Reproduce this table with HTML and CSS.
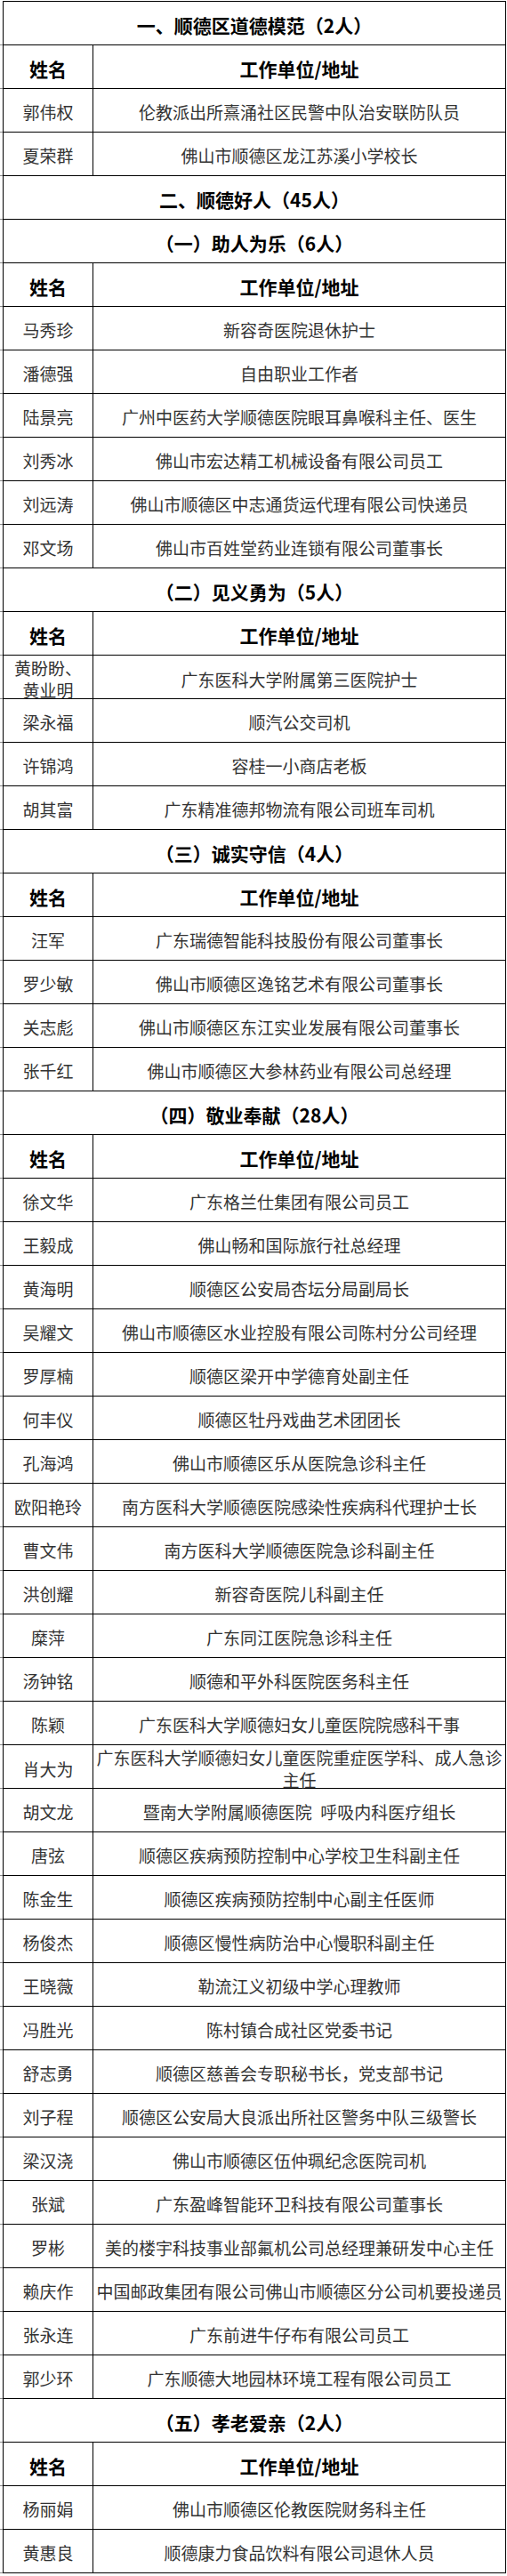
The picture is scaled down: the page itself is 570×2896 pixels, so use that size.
FILE: index.html
```html
<!DOCTYPE html>
<html lang="zh-CN">
<head>
<meta charset="utf-8">
<title>顺德区道德模范、顺德好人名单</title>
<link rel="stylesheet" href="styles.css">
</head>
<body>
<div class="sheet">
  <div class="row title">一、顺德区道德模范（2人）</div>
  <div class="row head"><div class="name">姓名</div><div class="work">工作单位/地址</div></div>
  <div class="row"><div class="name">郭伟权</div><div class="work">伦教派出所熹涌社区民警中队治安联防队员</div></div>
  <div class="row"><div class="name">夏荣群</div><div class="work">佛山市顺德区龙江苏溪小学校长</div></div>

  <div class="row title">二、顺德好人（45人）</div>

  <div class="row title">（一）助人为乐（6人）</div>
  <div class="row head"><div class="name">姓名</div><div class="work">工作单位/地址</div></div>
  <div class="row"><div class="name">马秀珍</div><div class="work">新容奇医院退休护士</div></div>
  <div class="row"><div class="name">潘德强</div><div class="work">自由职业工作者</div></div>
  <div class="row"><div class="name">陆景亮</div><div class="work">广州中医药大学顺德医院眼耳鼻喉科主任、医生</div></div>
  <div class="row"><div class="name">刘秀冰</div><div class="work">佛山市宏达精工机械设备有限公司员工</div></div>
  <div class="row"><div class="name">刘远涛</div><div class="work">佛山市顺德区中志通货运代理有限公司快递员</div></div>
  <div class="row"><div class="name">邓文场</div><div class="work">佛山市百姓堂药业连锁有限公司董事长</div></div>

  <div class="row title">（二）见义勇为（5人）</div>
  <div class="row head"><div class="name">姓名</div><div class="work">工作单位/地址</div></div>
  <div class="row"><div class="name two">黄盼盼、<br>黄业明</div><div class="work">广东医科大学附属第三医院护士</div></div>
  <div class="row"><div class="name">梁永福</div><div class="work">顺汽公交司机</div></div>
  <div class="row"><div class="name">许锦鸿</div><div class="work">容桂一小商店老板</div></div>
  <div class="row"><div class="name">胡其富</div><div class="work">广东精准德邦物流有限公司班车司机</div></div>

  <div class="row title">（三）诚实守信（4人）</div>
  <div class="row head"><div class="name">姓名</div><div class="work">工作单位/地址</div></div>
  <div class="row"><div class="name">汪军</div><div class="work">广东瑞德智能科技股份有限公司董事长</div></div>
  <div class="row"><div class="name">罗少敏</div><div class="work">佛山市顺德区逸铭艺术有限公司董事长</div></div>
  <div class="row"><div class="name">关志彪</div><div class="work">佛山市顺德区东江实业发展有限公司董事长</div></div>
  <div class="row"><div class="name">张千红</div><div class="work">佛山市顺德区大参林药业有限公司总经理</div></div>

  <div class="row title">（四）敬业奉献（28人）</div>
  <div class="row head"><div class="name">姓名</div><div class="work">工作单位/地址</div></div>
  <div class="row"><div class="name">徐文华</div><div class="work">广东格兰仕集团有限公司员工</div></div>
  <div class="row"><div class="name">王毅成</div><div class="work">佛山畅和国际旅行社总经理</div></div>
  <div class="row"><div class="name">黄海明</div><div class="work">顺德区公安局杏坛分局副局长</div></div>
  <div class="row"><div class="name">吴耀文</div><div class="work">佛山市顺德区水业控股有限公司陈村分公司经理</div></div>
  <div class="row"><div class="name">罗厚楠</div><div class="work">顺德区梁开中学德育处副主任</div></div>
  <div class="row"><div class="name">何丰仪</div><div class="work">顺德区牡丹戏曲艺术团团长</div></div>
  <div class="row"><div class="name">孔海鸿</div><div class="work">佛山市顺德区乐从医院急诊科主任</div></div>
  <div class="row"><div class="name">欧阳艳玲</div><div class="work">南方医科大学顺德医院感染性疾病科代理护士长</div></div>
  <div class="row"><div class="name">曹文伟</div><div class="work">南方医科大学顺德医院急诊科副主任</div></div>
  <div class="row"><div class="name">洪创耀</div><div class="work">新容奇医院儿科副主任</div></div>
  <div class="row"><div class="name">糜萍</div><div class="work">广东同江医院急诊科主任</div></div>
  <div class="row"><div class="name">汤钟铭</div><div class="work">顺德和平外科医院医务科主任</div></div>
  <div class="row"><div class="name">陈颖</div><div class="work">广东医科大学顺德妇女儿童医院院感科干事</div></div>
  <div class="row"><div class="name">肖大为</div><div class="work two">广东医科大学顺德妇女儿童医院重症医学科、成人急诊<br>主任</div></div>
  <div class="row"><div class="name">胡文龙</div><div class="work">暨南大学附属顺德医院&ensp;呼吸内科医疗组长</div></div>
  <div class="row"><div class="name">唐弦</div><div class="work">顺德区疾病预防控制中心学校卫生科副主任</div></div>
  <div class="row"><div class="name">陈金生</div><div class="work">顺德区疾病预防控制中心副主任医师</div></div>
  <div class="row"><div class="name">杨俊杰</div><div class="work">顺德区慢性病防治中心慢职科副主任</div></div>
  <div class="row"><div class="name">王晓薇</div><div class="work">勒流江义初级中学心理教师</div></div>
  <div class="row"><div class="name">冯胜光</div><div class="work">陈村镇合成社区党委书记</div></div>
  <div class="row"><div class="name">舒志勇</div><div class="work">顺德区慈善会专职秘书长，党支部书记</div></div>
  <div class="row"><div class="name">刘子程</div><div class="work">顺德区公安局大良派出所社区警务中队三级警长</div></div>
  <div class="row"><div class="name">梁汉浇</div><div class="work">佛山市顺德区伍仲珮纪念医院司机</div></div>
  <div class="row"><div class="name">张斌</div><div class="work">广东盈峰智能环卫科技有限公司董事长</div></div>
  <div class="row"><div class="name">罗彬</div><div class="work">美的楼宇科技事业部氟机公司总经理兼研发中心主任</div></div>
  <div class="row"><div class="name">赖庆作</div><div class="work">中国邮政集团有限公司佛山市顺德区分公司机要投递员</div></div>
  <div class="row"><div class="name">张永连</div><div class="work">广东前进牛仔布有限公司员工</div></div>
  <div class="row"><div class="name">郭少环</div><div class="work">广东顺德大地园林环境工程有限公司员工</div></div>

  <div class="row title">（五）孝老爱亲（2人）</div>
  <div class="row head"><div class="name">姓名</div><div class="work">工作单位/地址</div></div>
  <div class="row"><div class="name">杨丽娟</div><div class="work">佛山市顺德区伦教医院财务科主任</div></div>
  <div class="row"><div class="name">黄惠良</div><div class="work">顺德康力食品饮料有限公司退休人员</div></div>
</div>
</body>
</html>
```
FILE: styles.css
```css
html, body {
  margin: 0;
  padding: 0;
  background: #ffffff;
}

body {
  font-family: "Noto Sans CJK SC", "Noto Sans", sans-serif;
  color: #333333;
  font-size: 19px;
}

.sheet {
  box-sizing: border-box;
  width: 566px;
  margin: 1px 0 0 3px;
  border-top: 1px solid #000;
  border-left: 1px solid #000;
  border-right: 1px solid #000;
}

.row {
  position: relative;
  box-sizing: border-box;
  height: 49px;
  border-bottom: 1px solid #000;
  display: grid;
  grid-template-columns: 101px 1fr;
}

/* little gridline stubs sticking out on the left, as in the source sheet */
.row::before {
  content: "";
  position: absolute;
  left: -4px;
  bottom: -1px;
  width: 3px;
  height: 1px;
  background: #8a8a8a;
}

.name,
.work {
  display: flex;
  align-items: center;
  justify-content: center;
  text-align: center;
  padding-top: 3px;
  box-sizing: border-box;
  line-height: 24px;
  white-space: nowrap;
}

.name {
  border-right: 1px solid #000;
}

.two {
  line-height: 25px;
  padding-top: 1px;
}

.title {
  display: flex;
  align-items: center;
  justify-content: center;
  padding-top: 3px;
  font-size: 21px;
  font-weight: 700;
  color: #000;
}

.head .name,
.head .work {
  font-size: 21px;
  font-weight: 700;
  color: #000;
}
```
